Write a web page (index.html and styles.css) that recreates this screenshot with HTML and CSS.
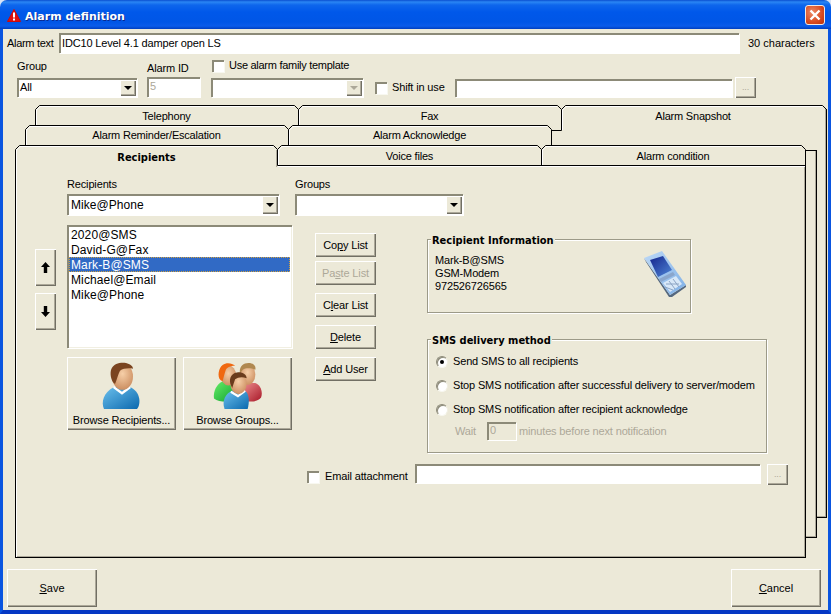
FILE: index.html
```html
<!DOCTYPE html>
<html lang="en">
<head>
<meta charset="utf-8">
<title>Alarm definition</title>
<link rel="stylesheet" href="styles.css">
</head>
<body>
<div class="window">
  <header class="titlebar">
    <svg class="alert" width="14" height="14" viewBox="0 0 14 14"><path d="M7 0.5 L13.5 12.5 H0.5 Z" fill="#e01010" stroke="#d00808"/><rect x="6" y="3.5" width="2" height="5" fill="#fff"/><rect x="6" y="9.5" width="2" height="2" fill="#fff"/></svg>
    <span class="title">Alarm definition</span>
    <div class="close"><svg width="12" height="12" viewBox="0 0 12 12"><path d="M1.5 1.5 L10.5 10.5 M10.5 1.5 L1.5 10.5" stroke="#fff" stroke-width="2.4" fill="none"/></svg></div>
  </header>
  <main class="client">
    <div class="row-text">
      <span class="lbl-text">Alarm text</span>
      <div class="field wide">IDC10 Level 4.1 damper open LS</div>
      <span class="count">30 characters</span>
    </div>
    <div class="row-meta">
      <div class="col-group">
        <span class="lbl-top">Group</span>
        <div class="combo"><span class="combo-val">All</span><span class="combo-btn"><i class="arrow"></i></span></div>
      </div>
      <div class="col-id">
        <span class="lbl-id">Alarm ID</span>
        <div class="field idbox dis">5</div>
      </div>
      <div class="col-family">
        <div class="check-row"><span class="check"></span><span class="lbl-family">Use alarm family template</span></div>
        <div class="combo"><span class="combo-val"></span><span class="combo-btn"><i class="arrow dis-arrow"></i></span></div>
      </div>
      <div class="col-shift">
        <span class="check"></span>
        <span class="lbl-shift">Shift in use</span>
        <div class="field shiftbox"></div>
        <div class="btn dots dis">...</div>
      </div>
    </div>

    <div class="tabframe">
      <div class="backpage back3"></div>
      <div class="backpage back2"></div>
      <svg class="tablines" width="812" height="62" viewBox="15 105 812 62">
        <path d="M35.5 125V109.5L39.5 105.5H294.5L298.5 109.5V125M298.5 109.5L302.5 105.5H557.5L561.5 109.5V130.5H551.5V145M561.5 109.5L565.5 105.5H822.5L826.5 109.5V167" class="ln"/>
        <path d="M25.5 145V129.5L29.5 125.5H284.5L288.5 129.5V145M288.5 129.5L292.5 125.5H547.5L551.5 129.5V131" class="ln"/>
        <path d="M15.5 167V149.5L19.5 145.5H273.5L277.5 149.5V165.5H805.5V150M277.5 149.5L281.5 145.5H537.5L541.5 149.5V165M541.5 149.5L545.5 145.5H801.5L805.5 149.5V167M805 150.5H816.5V167" class="ln"/>
        <path d="M16.5 167V150L20 146.5H273M278.5 165V150L282 146.5H537M542.5 165V150L546 146.5H801M36.5 125V110L40 106.5H294M299.5 125V110L303 106.5H557M26.5 145V130L30 126.5H284M289.5 145V130L293 126.5H547M562.5 130V110L566 106.5H822M278 166.5H805" class="hl"/>
        <path d="M276.5 150V167" class="sh"/>
      </svg>
      <div class="tabrow r1">
        <div class="tab">Telephony</div><div class="tab">Fax</div><div class="tab last">Alarm Snapshot</div>
      </div>
      <div class="tabrow r2">
        <div class="tab">Alarm Reminder/Escalation</div><div class="tab">Alarm Acknowledge</div>
      </div>
      <div class="tabrow r3">
        <div class="tab active">Recipients</div><div class="tab">Voice files</div><div class="tab last">Alarm condition</div>
      </div>

      <section class="panel">
        <div class="selects">
          <div class="sel-rec">
            <span class="lbl-sel">Recipients</span>
            <div class="combo tall"><span class="combo-val big">Mike@Phone</span><span class="combo-btn"><i class="arrow"></i></span></div>
          </div>
          <div class="sel-grp">
            <span class="lbl-sel">Groups</span>
            <div class="combo tall"><span class="combo-val"></span><span class="combo-btn"><i class="arrow"></i></span></div>
          </div>
        </div>

        <div class="main">
          <div class="arrows">
            <div class="btn arrowbtn"><svg width="9" height="11" viewBox="0 0 9 11"><path d="M4.5 0L9 5H6.2V11H2.8V5H0Z" fill="#000"/></svg></div>
            <div class="btn arrowbtn"><svg width="9" height="11" viewBox="0 0 9 11"><path d="M4.5 11L9 6H6.2V0H2.8V6H0Z" fill="#000"/></svg></div>
          </div>

          <div class="listcol">
            <div class="listbox">
              <div class="item">2020@SMS</div>
              <div class="item">David-G@Fax</div>
              <div class="item sel">Mark-B@SMS</div>
              <div class="item">Michael@Email</div>
              <div class="item">Mike@Phone</div>
            </div>
            <div class="browse">
              <div class="btn browsebtn">
                <svg class="pic" width="44" height="48" viewBox="0 0 44 50" preserveAspectRatio="none">
                  <defs>
                    <radialGradient id="skin" cx="50%" cy="40%" r="65%"><stop offset="0" stop-color="#f6cfa8"/><stop offset="1" stop-color="#c98a5c"/></radialGradient>
                    <linearGradient id="blue" x1="0" y1="0" x2="1" y2="1"><stop offset="0" stop-color="#6cc0ec"/><stop offset="1" stop-color="#0a68ae"/></linearGradient>
                  </defs>
                  <path d="M4 49C1 42 3 32 14 26L30 26C41 31 41 44 37 49Z" fill="url(#blue)"/>
                  <path d="M14 25L22 31L29 25L31 27L22 34L13 27Z" fill="#fff"/>
                  <ellipse cx="22.500" cy="15" rx="10.500" ry="14" fill="url(#skin)"/>
                  <path d="M13 21C10 16 10 9 12 6C14 2 20 0 26 1C30 2 33 4 33 7C28 6 23 7 20 9C18 13 17 18 15 23Z" fill="#7a4420"/>
                </svg>
                <span class="cap">Browse Recipients...</span>
              </div>
              <div class="btn browsebtn">
                <svg class="pic" width="50" height="48" viewBox="0 0 52 50" preserveAspectRatio="none">
                  <defs>
                    <linearGradient id="green" x1="0" y1="0" x2="1" y2="1"><stop offset="0" stop-color="#66ee66"/><stop offset="1" stop-color="#10a030"/></linearGradient>
                    <linearGradient id="red" x1="0" y1="0" x2="1" y2="1"><stop offset="0" stop-color="#ee9090"/><stop offset="1" stop-color="#a81828"/></linearGradient>
                    <radialGradient id="skin2" cx="50%" cy="40%" r="65%"><stop offset="0" stop-color="#f6cfa8"/><stop offset="1" stop-color="#c98a5c"/></radialGradient>
                    <linearGradient id="blue2" x1="0" y1="0" x2="1" y2="1"><stop offset="0" stop-color="#6cc0ec"/><stop offset="1" stop-color="#0a68ae"/></linearGradient>
                  </defs>
                  <path d="M32 36L30 22H44C50 24 52 32 50 37C46 42 38 42 32 40Z" fill="url(#red)"/>
                  <ellipse cx="36" cy="13" rx="8" ry="11" fill="url(#skin2)"/>
                  <path d="M28 12C27 5 31 1 37 1C42 1 45 4 44 8C39 6 34 6 31 8Z" fill="#b08850"/>
                  <path d="M1 38C0 30 4 23 10 20H22L24 40C16 42 6 42 1 38Z" fill="url(#green)"/>
                  <ellipse cx="16" cy="14" rx="8" ry="10.500" fill="url(#skin2)"/>
                  <path d="M8 19C4 15 6 6 10 3C14 0 20 1 23 4C18 4 14 6 13 9C12 12 11 16 10 20Z" fill="#f06810"/>
                  <path d="M12 49C9 40 13 33 20 30H33C38 33 38 42 36 49Z" fill="url(#blue2)"/>
                  <path d="M19 30L26 34L33 29L34 31L26 37L18 32Z" fill="#fff"/>
                  <ellipse cx="26.500" cy="22.500" rx="8.500" ry="11" fill="url(#skin2)"/>
                  <path d="M19 25C16 19 18 12 25 11C30 10 35 13 35 17C30 15 26 16 23 18C22 21 21 24 20 27Z" fill="#6a3c1c"/>
                </svg>
                <span class="cap">Browse Groups...</span>
              </div>
            </div>
          </div>

          <div class="actions">
            <div class="btn act">Co<u>p</u>y List</div>
            <div class="btn act dis paste">Pa<u>s</u>te List</div>
            <div class="btn act">C<u>l</u>ear List</div>
            <div class="btn act"><u>D</u>elete</div>
            <div class="btn act"><u>A</u>dd User</div>
          </div>

          <div class="infocol">
            <div class="group info">
              <span class="legend">Recipient Information</span>
              <div class="info-lines">
                <div>Mark-B@SMS</div>
                <div>GSM-Modem</div>
                <div>972526726565</div>
              </div>
              <svg class="phone" width="44" height="47" viewBox="0 0 44 47">
                <defs>
                  <linearGradient id="case" x1="0" y1="0" x2="1" y2="1"><stop offset="0" stop-color="#bcd8f6"/><stop offset="1" stop-color="#7fb0e6"/></linearGradient>
                  <linearGradient id="scr" x1="0" y1="0" x2="1" y2="1"><stop offset="0" stop-color="#14248c"/><stop offset="1" stop-color="#4f86d6"/></linearGradient>
                </defs>
                <path d="M1 7L3 11L26 46L29 46L43 36L43 34L27 44Z" fill="#55687f"/>
                <path d="M1 7L19 0L43 34L27 44Z" fill="url(#case)"/>
                <path d="M7 9L20 5L29 19L15 26Z" fill="url(#scr)"/>
                <path d="M16 28L30 21L32 24L18 31Z" fill="#8aa6cc"/>
                <path d="M20 32L33 25L39 33L27 41Z" fill="#d8e8f8"/>
                <path d="M23 33L36 33M22 36L30 39M26 30L32 38M30 28L36 36" stroke="#8ca4c4" stroke-width="1" fill="none"/>
              </svg>
            </div>
            <div class="group sms">
              <span class="legend">SMS delivery method</span>
              <div class="radio-row"><span class="radio on"></span><span>Send SMS to all recipients</span></div>
              <div class="radio-row"><span class="radio"></span><span>Stop SMS notification after successful delivery to server/modem</span></div>
              <div class="radio-row"><span class="radio"></span><span>Stop SMS notification after recipient acknowledge</span></div>
              <div class="wait-row dis"><span class="wait">Wait</span><div class="field waitbox">0</div><span>minutes before next notification</span></div>
            </div>
          </div>
        </div>

        <div class="email">
          <span class="check"></span>
          <span class="lbl-mail">Email attachment</span>
          <div class="field mailbox"></div>
          <div class="btn dots dis">...</div>
        </div>
      </section>
    </div>

    <footer class="footer">
      <div class="btn big-btn"><span class="big-label"><u>S</u>ave</span></div>
      <div class="btn big-btn"><span class="big-label"><u>C</u>ancel</span></div>
    </footer>
  </main>
</div>
</body>
</html>
```
FILE: styles.css
```css
* { box-sizing: border-box; }
html, body { margin: 0; padding: 0; height: 100%; background: #d8e4f8; overflow: hidden; }
body {
  font-family: "Liberation Sans", Arial, sans-serif;
  font-size: 11px;
  line-height: 13px;
  letter-spacing: -.15px;
  color: #000;
}
.window {
  width: 831px;
  height: 614px;
  display: flex;
  flex-direction: column;
  border-radius: 7px 7px 0 0;
  overflow: hidden;
}
.titlebar {
  height: 29px;
  flex: none;
  display: flex;
  align-items: center;
  padding: 1px 6px 0 7px;
  background: linear-gradient(#0a4fd0 0, #2a86f4 2px, #0e66ec 5px, #0058ea 12px, #0056e6 22px, #0a5cea 26px, #003fc0 29px);
}
.alert { flex: none; margin-right: 4px; margin-top: 1px; }
.title {
  flex: 1;
  color: #fff;
  font-family: "DejaVu Sans", sans-serif;
  font-weight: 700;
  font-size: 11px;
  letter-spacing: 0;
  padding-top: 3px;
  text-shadow: 1px 1px 0 #0a2a90;
}
.close {
  width: 20px;
  height: 20px;
  flex: none;
  display: flex;
  align-items: center;
  justify-content: center;
  border: 1px solid #f4e8e0;
  border-radius: 3px;
  background: radial-gradient(circle at 35% 35%, #ec8a66, #d84a20 60%, #b8320c);
}
.client {
  flex: 1;
  background: #ece9d8;
  border-left: 3px solid #0a55e0;
  border-right: 3px solid #0a55e0;
  border-bottom: 4px solid #0437c4;
  display: flex;
  flex-direction: column;
  min-height: 0;
}

.field {
  background: #fff;
  box-shadow: inset 2px 2px 0 #8c8a78, 1px 1px 0 #fff;
  padding: 3px 3px 0;
  white-space: nowrap;
}
.dis { color: #aca899; }

.row-text { display: flex; align-items: center; margin-top: 4px; padding-left: 4px; height: 20px; }
.lbl-text { width: 52px; flex: none; letter-spacing: -.3px; }
.wide { width: 680px; height: 20px; padding-top: 4px; }
.count { margin-left: 9px; letter-spacing: 0; }

.row-meta { display: flex; padding-left: 14px; margin-top: 6px; height: 39px; }
.col-group { width: 120px; margin-right: 10px; padding-top: 1px; }
.lbl-top { display: block; height: 18px; }
.col-id { width: 53px; margin-right: 11px; }
.lbl-id { display: block; height: 18px; padding-top: 3px; }
.idbox { height: 20px; width: 53px; }
.col-family { width: 152px; margin-right: 12px; }
.check-row { display: flex; align-items: center; gap: 5px; height: 13px; margin-bottom: 6px; margin-left: 1px; }
.lbl-family { letter-spacing: -.28px; }
.col-shift { display: flex; align-items: center; padding-top: 18px; }
.lbl-shift { margin-left: 5px; width: 63px; }
.shiftbox { width: 277px; height: 18px; margin-right: 3px; }
.dots { width: 21px; height: 21px; font-size: 9px; }

.combo {
  height: 19px;
  display: flex;
  align-items: stretch;
  background: #fff;
  box-shadow: inset 2px 2px 0 #8c8a78, 1px 1px 0 #fff;
  padding: 2px 1px 1px 2px;
}
.combo.tall { height: 21px; }
.combo-val { flex: 1; padding: 1px 1px 0; }
.combo-val.big { font-size: 12px; letter-spacing: .05px; padding-top: 3px; padding-left: 2px; }
.combo-btn {
  width: 16px;
  flex: none;
  display: flex;
  align-items: center;
  justify-content: center;
  background: #ece9d8;
  box-shadow: inset 1px 1px 0 #fff, inset -1px -1px 0 #716f64, inset -2px -2px 0 #aca899;
}
.arrow { width: 0; height: 0; border-left: 4px solid transparent; border-right: 4px solid transparent; border-top: 4px solid #000; }
.dis-arrow { border-top-color: #aca899; }

.check {
  display: block;
  width: 12px;
  height: 12px;
  flex: none;
  background: #fff;
  box-shadow: inset 2px 2px 0 #8c8a78, 1px 1px 0 #f8f8f0;
}

.btn {
  display: flex;
  align-items: center;
  justify-content: center;
  background: #ece9d8;
  box-shadow: inset 1px 1px 0 #fff, inset -1px -1px 0 #716f64, inset -2px -2px 0 #aca899;
  white-space: nowrap;
}
.btn.dis { color: #aca899; }

.tabframe { position: relative; margin: 7px 0 0 12px; width: 812px; }
.backpage { position: absolute; background: #ece9d8; border-right: 1px solid #000; border-bottom: 1px solid #000; box-shadow: inset -1px -1px 0 #aca899; }
.back3 { left: 547px; top: 4px; width: 265px; height: 409px; }
.back2 { left: 527px; top: 45px; width: 275px; height: 388px; }
.tablines { position: absolute; left: 0; top: 0; z-index: 3; pointer-events: none; }
.ln { fill: none; stroke: #000; stroke-width: 1; }
.hl { fill: none; stroke: #fff; stroke-width: 1; }
.sh { fill: none; stroke: #aca899; stroke-width: 1; }

.tabrow { display: flex; position: relative; z-index: 4; }
.tab { width: 263px; flex: none; text-align: center; letter-spacing: -.2px; }
.tab.last { width: 264px; }
.r1 { height: 20px; padding: 5px 0 0 20px; }
.r2 { height: 20px; padding: 4px 0 0 10px; }
.r3 { height: 21px; padding-top: 5px; }
.active { font-family: "DejaVu Sans Condensed", "Liberation Sans", sans-serif; font-weight: 700; font-size: 11px; letter-spacing: 0; padding-top: 1px; }

.panel {
  position: relative;
  z-index: 2;
  width: 791px;
  height: 392px;
  padding: 12px 0 0 19px;
  background: #ece9d8;
  border-left: 1px solid #000;
  border-right: 1px solid #000;
  border-bottom: 1px solid #000;
  box-shadow: inset 1px 0 0 #fff, inset -1px -1px 0 #aca899;
}
.selects { display: flex; padding-left: 32px; height: 37px; }
.sel-rec { width: 212px; margin-right: 16px; }
.sel-grp { width: 168px; }
.lbl-sel { display: block; height: 16px; }

.main { display: flex; margin-top: 10px; }
.arrows { width: 21px; margin: 24px 11px 0 0; display: flex; flex-direction: column; gap: 7px; }
.arrowbtn { height: 37px; }
.listcol { width: 225px; flex: none; }
.listbox {
  height: 123px;
  background: #fff;
  box-shadow: inset 2px 2px 0 #8c8a78, inset -1px -1px 0 #f1efe2, 1px 1px 0 #fff;
  padding: 2px 2px 0;
}
.item { height: 15px; line-height: 16px; padding-left: 2px; font-size: 12px; letter-spacing: .12px; }
.item.sel { background: #316ac5; color: #fff; outline: 1px dotted #d0a040; outline-offset: -1px; }
.browse { display: flex; gap: 7px; margin-top: 9px; }
.browsebtn { width: 109px; height: 73px; flex-direction: column; justify-content: flex-start; padding-top: 5px; }
.pic { display: block; flex: none; }
.cap { margin-top: 4px; }
.actions { width: 61px; flex: none; margin: 8px 0 0 23px; display: flex; flex-direction: column; gap: 8px; }
.act { height: 24px; }
.paste { margin-top: -4px; }
.infocol { margin: 14px 0 0 51px; }
.group {
  position: relative;
  border: 1px solid #9c9a88;
  box-shadow: 1px 1px 0 #fff, inset 1px 1px 0 #fff;
}
.legend {
  position: absolute;
  left: 3px;
  top: -6px;
  padding: 0 1px;
  background: #ece9d8;
  font-family: "DejaVu Sans Condensed", "Liberation Sans", sans-serif;
  font-weight: 700;
  font-size: 11px;
  letter-spacing: 0;
}
.info { width: 264px; height: 74px; padding: 14px 3px 0 7px; display: flex; justify-content: space-between; align-items: flex-start; }
.phone { margin-top: -3px; }
.sms { width: 340px; height: 114px; margin-top: 26px; padding: 9px 0 0 8px; }
.radio-row { height: 24px; display: flex; align-items: center; gap: 5px; padding-top: 1px; }
.radio {
  width: 12px;
  height: 12px;
  flex: none;
  border-radius: 50%;
  background: #fff;
  border: 1px solid;
  border-color: #8c8a78 #f1efe2 #f8f8f0 #8c8a78;
  box-shadow: inset 1px 1px 0 #8c8a78;
  position: relative;
}
.radio.on::after {
  content: "";
  position: absolute;
  left: 3px;
  top: 3px;
  width: 4px;
  height: 4px;
  border-radius: 50%;
  background: #000;
}
.wait-row { display: flex; align-items: center; height: 20px; padding-left: 19px; margin-top: 0; }
.wait { width: 32px; padding-top: 1px; }
.waitbox { width: 29px; height: 18px; margin-right: 3px; padding: 2px 3px 0; color: #aca899; background: #ece9d8; }
.email { display: flex; align-items: center; margin: 11px 0 0 272px; height: 21px; }
.email .check, .lbl-mail { position: relative; top: 2px; }
.lbl-mail { margin-left: 6px; width: 90px; }
.mailbox { width: 345px; height: 19px; margin-right: 7px; align-self: flex-start; }

.footer { display: flex; justify-content: space-between; margin-top: 11px; padding: 0 7px 0 4px; }
.big-btn { width: 90px; height: 38px; }
.big-label { padding-top: 1px; letter-spacing: 0; }
```
